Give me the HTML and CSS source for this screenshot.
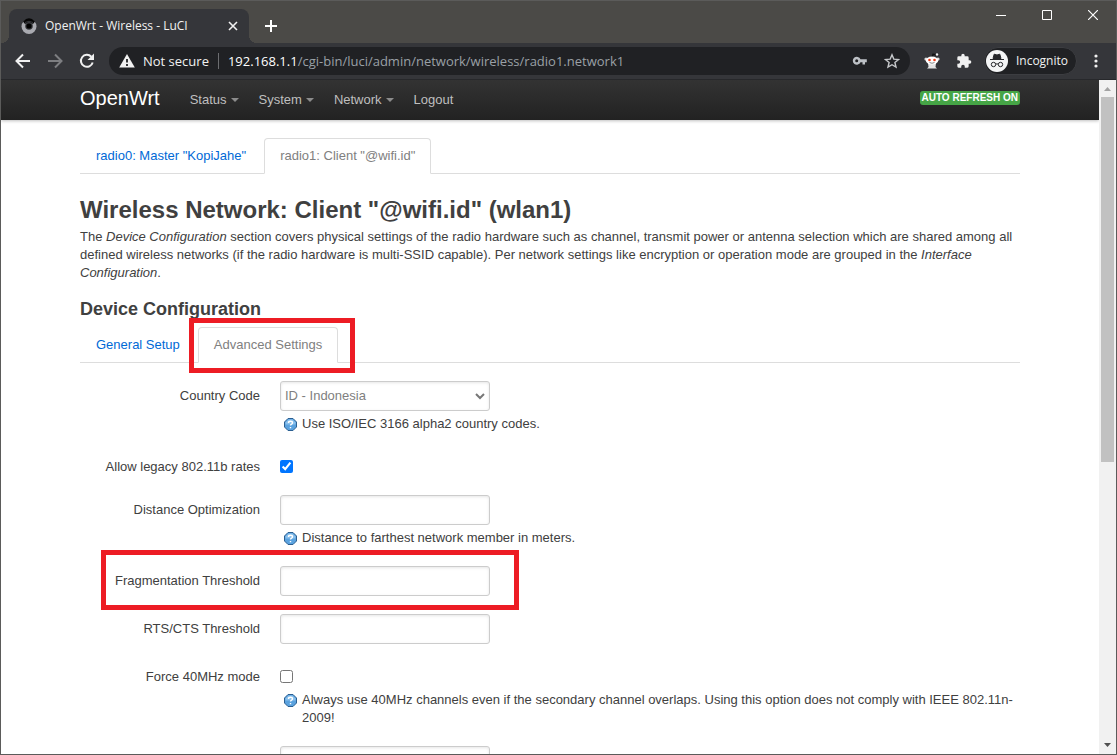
FILE: index.html
```html
<!DOCTYPE html>
<html lang="en">
<head>
<meta charset="utf-8">
<title>OpenWrt - Wireless - LuCI</title>
<link rel="stylesheet" href="styles.css">
</head>
<body>
<div class="window">
  <div class="titlebar">
    <div class="browser-tab">
      <svg class="favicon" width="16" height="16" viewBox="0 0 16 16" aria-hidden="true">
        <circle cx="8" cy="8.500" r="7.500" fill="#a9aab0"/>
        <path d="M2 3.500Q8-3 14 3.500L12 6Q8 3 4 6Z" fill="#050505"/>
        <circle cx="8" cy="8" r="3.800" fill="#35363a"/>
        <circle cx="8" cy="8" r="2.600" fill="#000"/>
        <path d="M4 4.500Q8 2 12 4.500" fill="none" stroke="#35363a"/>
      </svg>
      <span class="browser-tab-title">OpenWrt - Wireless - LuCI</span>
      <button class="chrome-button tab-close" aria-label="Close tab">
        <svg width="10" height="10" viewBox="0 0 10 10"><path d="M1 1l8 8M9 1l-8 8" stroke="#f1f1f1" stroke-width="1.600"/></svg>
      </button>
    </div>
    <button class="chrome-button new-tab" aria-label="New tab">
      <svg width="12" height="12" viewBox="0 0 12 12"><path d="M6 0v12M0 6h12" stroke="#fff" stroke-width="2"/></svg>
    </button>
    <div class="window-controls">
      <button class="chrome-button window-control" aria-label="Minimize"><svg width="10" height="10" viewBox="0 0 10 10"><path d="M0 5.500h10" stroke="#fff"/></svg></button>
      <button class="chrome-button window-control" aria-label="Maximize"><svg width="10" height="10" viewBox="0 0 10 10"><path d="M.5.500h9v9h-9z" fill="none" stroke="#fff"/></svg></button>
      <button class="chrome-button window-control" aria-label="Close"><svg width="10" height="10" viewBox="0 0 10 10"><path d="M0 0l10 10M10 0L0 10" stroke="#fff" stroke-width="1.200"/></svg></button>
    </div>
  </div>

  <div class="toolbar">
    <button class="chrome-button tool" aria-label="Back"><svg width="16" height="16" viewBox="0 0 16 16"><path d="M15 8H2M8 1.500L1.500 8 8 14.500" fill="none" stroke="#f1f1f1" stroke-width="2"/></svg></button>
    <button class="chrome-button tool" aria-label="Forward"><svg width="16" height="16" viewBox="0 0 16 16"><path d="M1 8h13M8 1.500L14.500 8 8 14.500" fill="none" stroke="#7d7e81" stroke-width="2"/></svg></button>
    <button class="chrome-button tool" aria-label="Reload"><svg width="16" height="16" viewBox="0 0 16 16"><path d="M13.700 9.500A6 6 0 1 1 12.300 3.700" fill="none" stroke="#f1f1f1" stroke-width="2"/><path d="M15 .5v6.500H8.500z" fill="#f1f1f1"/></svg></button>
    <div class="omnibox">
      <button class="chrome-button security">
        <svg width="16" height="14" viewBox="0 0 16 14" aria-hidden="true"><path d="M8 0l7.800 13.500H.2z" fill="#f1f1f1"/><path d="M8 5v3.500M8 10v2" stroke="#202124" stroke-width="1.800"/></svg>
        Not secure
      </button>
      <div class="address" role="textbox" aria-label="Address"><span class="address-host">192.168.1.1</span>/cgi-bin/luci/admin/network/wireless/radio1.network1</div>
      <button class="chrome-button tool" aria-label="Saved passwords"><svg width="16" height="16" viewBox="0 0 16 16"><path d="M8.500 6.300a4 4 0 1 0 0 2.900H10.500V11.500H13V9.200h1.800V6.300z" fill="#bdc1c6"/><circle cx="4.700" cy="7.700" r="1.500" fill="#202124"/></svg></button>
      <button class="chrome-button tool" aria-label="Bookmark this page"><svg width="16" height="16" viewBox="0 0 16 16"><path d="M8 1.800l1.800 4.300 4.700.4-3.600 3 1.100 4.600L8 11.700l-4 2.400 1.100-4.600-3.600-3 4.700-.4z" fill="none" stroke="#c6c8cb" stroke-width="1.400"/></svg></button>
    </div>
    <button class="chrome-button tool extension" aria-label="Reddit extension"><svg width="16" height="16" viewBox="0 0 16 16">
      <path d="M8 4.500L9 1.200l3.500.6" fill="none" stroke="#111" stroke-width="1.400"/><circle cx="13" cy="1.500" r="1.200" fill="#eee"/>
      <path d="M4 10h8l-.5 4 1.500 1.500H3L4.500 14z" fill="#e4e4e4"/><circle cx="2" cy="6" r="1.600" fill="#ddd"/><circle cx="14" cy="6" r="1.600" fill="#ddd"/>
      <ellipse cx="8" cy="7.500" rx="6.200" ry="4" fill="#fff"/><circle cx="5.500" cy="7" r="1.300" fill="#f03a17"/><circle cx="10.500" cy="7" r="1.300" fill="#f03a17"/><path d="M5.500 9.500q2.500 1.500 5 0" fill="none" stroke="#888"/></svg></button>
    <button class="chrome-button tool" aria-label="Extensions"><svg width="16" height="16" viewBox="0 0 24 24"><path d="M20.500 11H19V7a2 2 0 0 0-2-2h-4V3.500a2.500 2.500 0 0 0-5 0V5H4a2 2 0 0 0-2 2v3.800h1.500a2.700 2.700 0 0 1 0 5.400H2V20a2 2 0 0 0 2 2h3.800v-1.500a2.700 2.700 0 0 1 5.400 0V22H17a2 2 0 0 0 2-2v-4h1.500a2.500 2.500 0 0 0 0-5z" fill="#f1f1f1"/></svg></button>
    <button class="chrome-button incognito">
      <svg width="22" height="22" viewBox="0 0 22 22" aria-hidden="true"><circle cx="11" cy="11" r="11" fill="#f4f5f6"/><path d="M4 9.500h14M7 8.500l1.200-4.300 2.800.8 2.800-.8L15 8.500z" fill="#26272b" stroke="#26272b"/><circle cx="7.500" cy="14.500" r="2.200" fill="none" stroke="#26272b"/><circle cx="14.500" cy="14.500" r="2.200" fill="none" stroke="#26272b"/><path d="M9.700 14.200q1.300-.8 2.600 0" fill="none" stroke="#26272b"/></svg>
      Incognito
    </button>
    <button class="chrome-button menu" aria-label="Menu"><svg width="4" height="14" viewBox="0 0 4 14"><g fill="#f1f1f1"><circle cx="2" cy="2" r="1.600"/><circle cx="2" cy="7" r="1.600"/><circle cx="2" cy="12" r="1.600"/></g></svg></button>
  </div>

  <div class="viewport">
    <div class="page">
      <header class="site-header">
        <div class="container site-bar">
          <a class="brand" href="#">OpenWrt</a>
          <nav class="site-nav">
            <a class="nav-link has-menu" href="#">Status</a>
            <a class="nav-link has-menu" href="#">System</a>
            <a class="nav-link has-menu" href="#">Network</a>
            <a class="nav-link" href="#">Logout</a>
          </nav>
          <button class="badge">Auto Refresh on</button>
        </div>
      </header>

      <main class="container content">
        <nav class="tabs">
          <a class="tab" href="#">radio0: Master "KopiJahe"</a>
          <a class="tab active" href="#">radio1: Client "@wifi.id"</a>
        </nav>
        <h2 class="page-title">Wireless Network: Client "@wifi.id" (wlan1)</h2>
        <p class="description">The <em>Device Configuration</em> section covers physical settings of the radio hardware such as channel, transmit power or antenna selection which are shared among all defined wireless networks (if the radio hardware is multi-SSID capable). Per network settings like encryption or operation mode are grouped in the <em>Interface Configuration</em>.</p>

        <h3 class="section-title">Device Configuration</h3>
        <nav class="tabs">
          <a class="tab" href="#">General Setup</a>
          <a class="tab active marked-tab" href="#">Advanced Settings</a>
        </nav>

        <form class="settings">
          <div class="row">
            <label class="label" for="country">Country Code</label>
            <div class="field">
              <div class="select-wrap">
                <select class="control select" id="country"><option>ID - Indonesia</option></select>
                <svg class="select-arrow" width="10" height="7" viewBox="0 0 10 7" aria-hidden="true"><path d="M1 1l4 4 4-4" fill="none" stroke="#777" stroke-width="2"/></svg>
              </div>
              <div class="help"><svg class="help-icon" width="13" height="13" viewBox="0 0 13 13" aria-hidden="true"><path d="M4 .5h5L12.500 4v5L9 12.500H4L.5 9V4z" fill="#5aa2df" stroke="#2b5f91"/><path d="M4.500 1.500h4l3 3v2h-10v-2z" fill="#8ac0ec"/><path d="M4.500 5q0-1.700 2-1.700t2 1.500q0 1-1.200 1.500-.8.400-.8 1.200M6.500 9v1.300" fill="none" stroke="#fff" stroke-width="1.400"/></svg>
                <span>Use ISO/IEC 3166 alpha2 country codes.</span></div>
            </div>
          </div>
          <div class="row">
            <label class="label" for="legacy">Allow legacy 802.11b rates</label>
            <div class="field"><div class="check-line"><input class="check" type="checkbox" id="legacy" checked></div></div>
          </div>
          <div class="row">
            <label class="label" for="distance">Distance Optimization</label>
            <div class="field">
              <input class="control" type="text" id="distance">
              <div class="help"><svg class="help-icon" width="13" height="13" viewBox="0 0 13 13" aria-hidden="true"><path d="M4 .5h5L12.500 4v5L9 12.500H4L.5 9V4z" fill="#5aa2df" stroke="#2b5f91"/><path d="M4.500 1.500h4l3 3v2h-10v-2z" fill="#8ac0ec"/><path d="M4.500 5q0-1.700 2-1.700t2 1.500q0 1-1.200 1.500-.8.400-.8 1.200M6.500 9v1.300" fill="none" stroke="#fff" stroke-width="1.400"/></svg>
                <span>Distance to farthest network member in meters.</span></div>
            </div>
          </div>
          <div class="row marked-row">
            <label class="label" for="frag">Fragmentation Threshold</label>
            <div class="field"><input class="control" type="text" id="frag"></div>
          </div>
          <div class="row">
            <label class="label" for="rts">RTS/CTS Threshold</label>
            <div class="field"><input class="control" type="text" id="rts"></div>
          </div>
          <div class="row">
            <label class="label" for="force40">Force 40MHz mode</label>
            <div class="field">
              <div class="check-line"><input class="check" type="checkbox" id="force40"></div>
              <div class="help"><svg class="help-icon" width="13" height="13" viewBox="0 0 13 13" aria-hidden="true"><path d="M4 .5h5L12.500 4v5L9 12.500H4L.5 9V4z" fill="#5aa2df" stroke="#2b5f91"/><path d="M4.500 1.500h4l3 3v2h-10v-2z" fill="#8ac0ec"/><path d="M4.500 5q0-1.700 2-1.700t2 1.500q0 1-1.200 1.500-.8.400-.8 1.200M6.500 9v1.300" fill="none" stroke="#fff" stroke-width="1.400"/></svg>
                <span>Always use 40MHz channels even if the secondary channel overlaps. Using this option does not comply with IEEE 802.11n-2009!</span></div>
            </div>
          </div>
          <div class="row">
            <div class="label"></div>
            <div class="field"><input class="control" type="text" aria-label="Beacon Interval"></div>
          </div>
        </form>
      </main>
    </div>
    <div class="scrollbar" aria-hidden="true">
      <svg class="scroll-arrow" width="17" height="17" viewBox="0 0 17 17"><path d="M5 11l3.500-4 3.500 4z" fill="#a3a3a3"/></svg>
      <div class="scroll-track"><div class="scroll-thumb"></div></div>
      <svg class="scroll-arrow" width="17" height="17" viewBox="0 0 17 17"><path d="M5 6h7l-3.500 4z" fill="#505050"/></svg>
    </div>
  </div>
</div>
</body>
</html>
```

FILE: styles.css
```css
*, *::before, *::after { box-sizing: border-box; }

body {
  margin: 0;
  font: 13px/18px "Liberation Sans", Arial, sans-serif;
  color: #404040;
}

a { color: #0069d6; text-decoration: none; }

/* Browser window */
.window {
  display: flex;
  flex-direction: column;
  height: 100vh;
  border: 1px solid #5b5b5a;
  background: #fff;
  overflow: hidden;
}

.chrome-button {
  display: flex;
  align-items: center;
  justify-content: center;
  padding: 0;
  border: 0;
  background: none;
  color: #f1f1f1;
  font: 12px/16px "Open Sans", "Noto Sans", sans-serif;
}

.titlebar {
  display: flex;
  flex: none;
  height: 42px;
  padding-left: 8px;
  background: #4b4a47;
}

.browser-tab {
  position: relative;
  display: flex;
  align-items: center;
  gap: 8px;
  width: 240px;
  margin-top: 8px;
  padding: 0 10px 0 12px;
  border-radius: 8px 8px 0 0;
  background: #35363a;
}

.browser-tab::before,
.browser-tab::after {
  content: "";
  position: absolute;
  bottom: 0;
  width: 8px;
  height: 8px;
}

.browser-tab::before { right: 100%; background: radial-gradient(circle at 0 0, transparent 8px, #35363a 8px); }
.browser-tab::after { left: 100%; background: radial-gradient(circle at 100% 0, transparent 8px, #35363a 8px); }

.browser-tab-title {
  flex: 1;
  color: #f1f1f1;
  font: 12px/16px "Open Sans", "Noto Sans", sans-serif;
  white-space: nowrap;
}

.tab-close { width: 12px; }
.new-tab { width: 28px; height: 34px; margin: 8px 0 0 8px; }
.window-controls { display: flex; margin-left: auto; }
.window-control { width: 46px; height: 28px; }

.toolbar {
  display: flex;
  flex: none;
  align-items: center;
  height: 37px;
  padding: 0 2px 0 6px;
  background: #35363a;
  border-bottom: 1px solid #27282b;
}

.tool { flex: none; width: 32px; height: 28px; }

.omnibox {
  display: flex;
  flex: 1;
  align-items: center;
  height: 28px;
  margin-left: 6px;
  padding: 0 2px 0 10px;
  border-radius: 14px;
  background: #202124;
}

.security { gap: 8px; padding-right: 9px; border-right: 1px solid #6c6d70; font-size: 13px; }

.address {
  flex: 1;
  padding-left: 9px;
  color: #9aa0a6;
  font: 13px/18px "Open Sans", "Noto Sans", sans-serif;
  white-space: nowrap;
}

.address-host { color: #fff; }
.extension { margin-left: 6px; }

.incognito {
  gap: 8px;
  height: 28px;
  margin-left: 4px;
  padding: 0 8px 0 1px;
  border: 1px solid #3c3d41;
  border-radius: 14px;
  background: #202124;
}

.menu { width: 37px; height: 28px; }

/* Page area and its scrollbar */
.viewport { display: flex; flex: 1; min-height: 0; }
.page { flex: 1; min-width: 0; overflow: hidden; }

.scrollbar { display: flex; flex-direction: column; width: 17px; background: #f1f1f1; }
.scroll-arrow { flex: none; }
.scroll-track { flex: 1; padding: 0 2px; }
.scroll-thumb { height: 57%; background: #c1c1c1; }

.container { width: 100%; max-width: 940px; margin: 0 auto; }

/* LuCI header */
.site-header {
  background: linear-gradient(#333, #222);
  box-shadow: 0 1px 3px rgba(0, 0, 0, .25);
}

.site-bar { display: flex; align-items: center; height: 40px; }

.brand {
  padding-right: 20px;
  padding-bottom: 4px;
  color: #fff;
  font-size: 20px;
  line-height: 20px;
}

.site-nav { display: flex; }

.nav-link {
  display: flex;
  align-items: center;
  padding: 0 10px;
  color: #bfbfbf;
}

.has-menu::after {
  content: "";
  margin-left: 4px;
  border: 4px solid transparent;
  border-top-color: #8c8c8c;
  border-bottom: 0;
}

.badge {
  margin: 0 0 4px auto;
  padding: 0 2px;
  border: 0;
  border-radius: 3px;
  background: #46a546;
  color: #fff;
  font: bold 10px/14px "Liberation Sans", Arial, sans-serif;
  text-transform: uppercase;
  white-space: nowrap;
}

/* Content */
.content { padding-top: 18px; }

.tabs {
  display: flex;
  gap: 2px;
  margin-bottom: 18px;
  box-shadow: inset 0 -1px #ddd;
}

.tab {
  padding: 0 15px;
  border: 1px solid transparent;
  border-radius: 4px 4px 0 0;
  line-height: 34px;
}

.tab.active {
  background: #fff;
  border-color: #ddd;
  border-bottom-color: #fff;
  color: #808080;
}

.page-title, .section-title { margin: 0; line-height: 36px; }
.page-title { font-size: 24px; }
.section-title { font-size: 18px; }
.description { margin: 0 0 9px; }

.row { display: flex; gap: 20px; margin-bottom: 18px; }
.label { flex: none; width: 180px; padding-top: 6px; text-align: right; }
.field { flex: 1; min-width: 0; }

.control {
  display: block;
  width: 210px;
  height: 30px;
  padding: 4px;
  border: 1px solid #ccc;
  border-radius: 3px;
  background: #fff;
  box-shadow: inset 0 1px 3px rgba(0, 0, 0, .1);
  color: #808080;
  font: inherit;
}

.select { appearance: none; }
.select-wrap { position: relative; width: 210px; }
.select-arrow { position: absolute; right: 5px; top: 12px; pointer-events: none; }

.check-line { display: flex; align-items: center; height: 25px; padding-top: 4px; }
.check { width: 13px; height: 13px; margin: 0; accent-color: #0075ff; }

.help { display: flex; gap: 5px; padding: 4px 0 1px 4px; }
.help-icon { flex: none; margin-top: 3px; }

/* Red highlight boxes */
.marked-tab, .marked-row { position: relative; }

.marked-tab::after,
.marked-row::after {
  content: "";
  position: absolute;
  border: 5px solid #ed1c24;
  pointer-events: none;
}

.marked-tab::after { inset: -10px -18px -11px -10px; }
.marked-row::after { left: 21px; top: -16px; width: 418px; height: 60px; }
```
